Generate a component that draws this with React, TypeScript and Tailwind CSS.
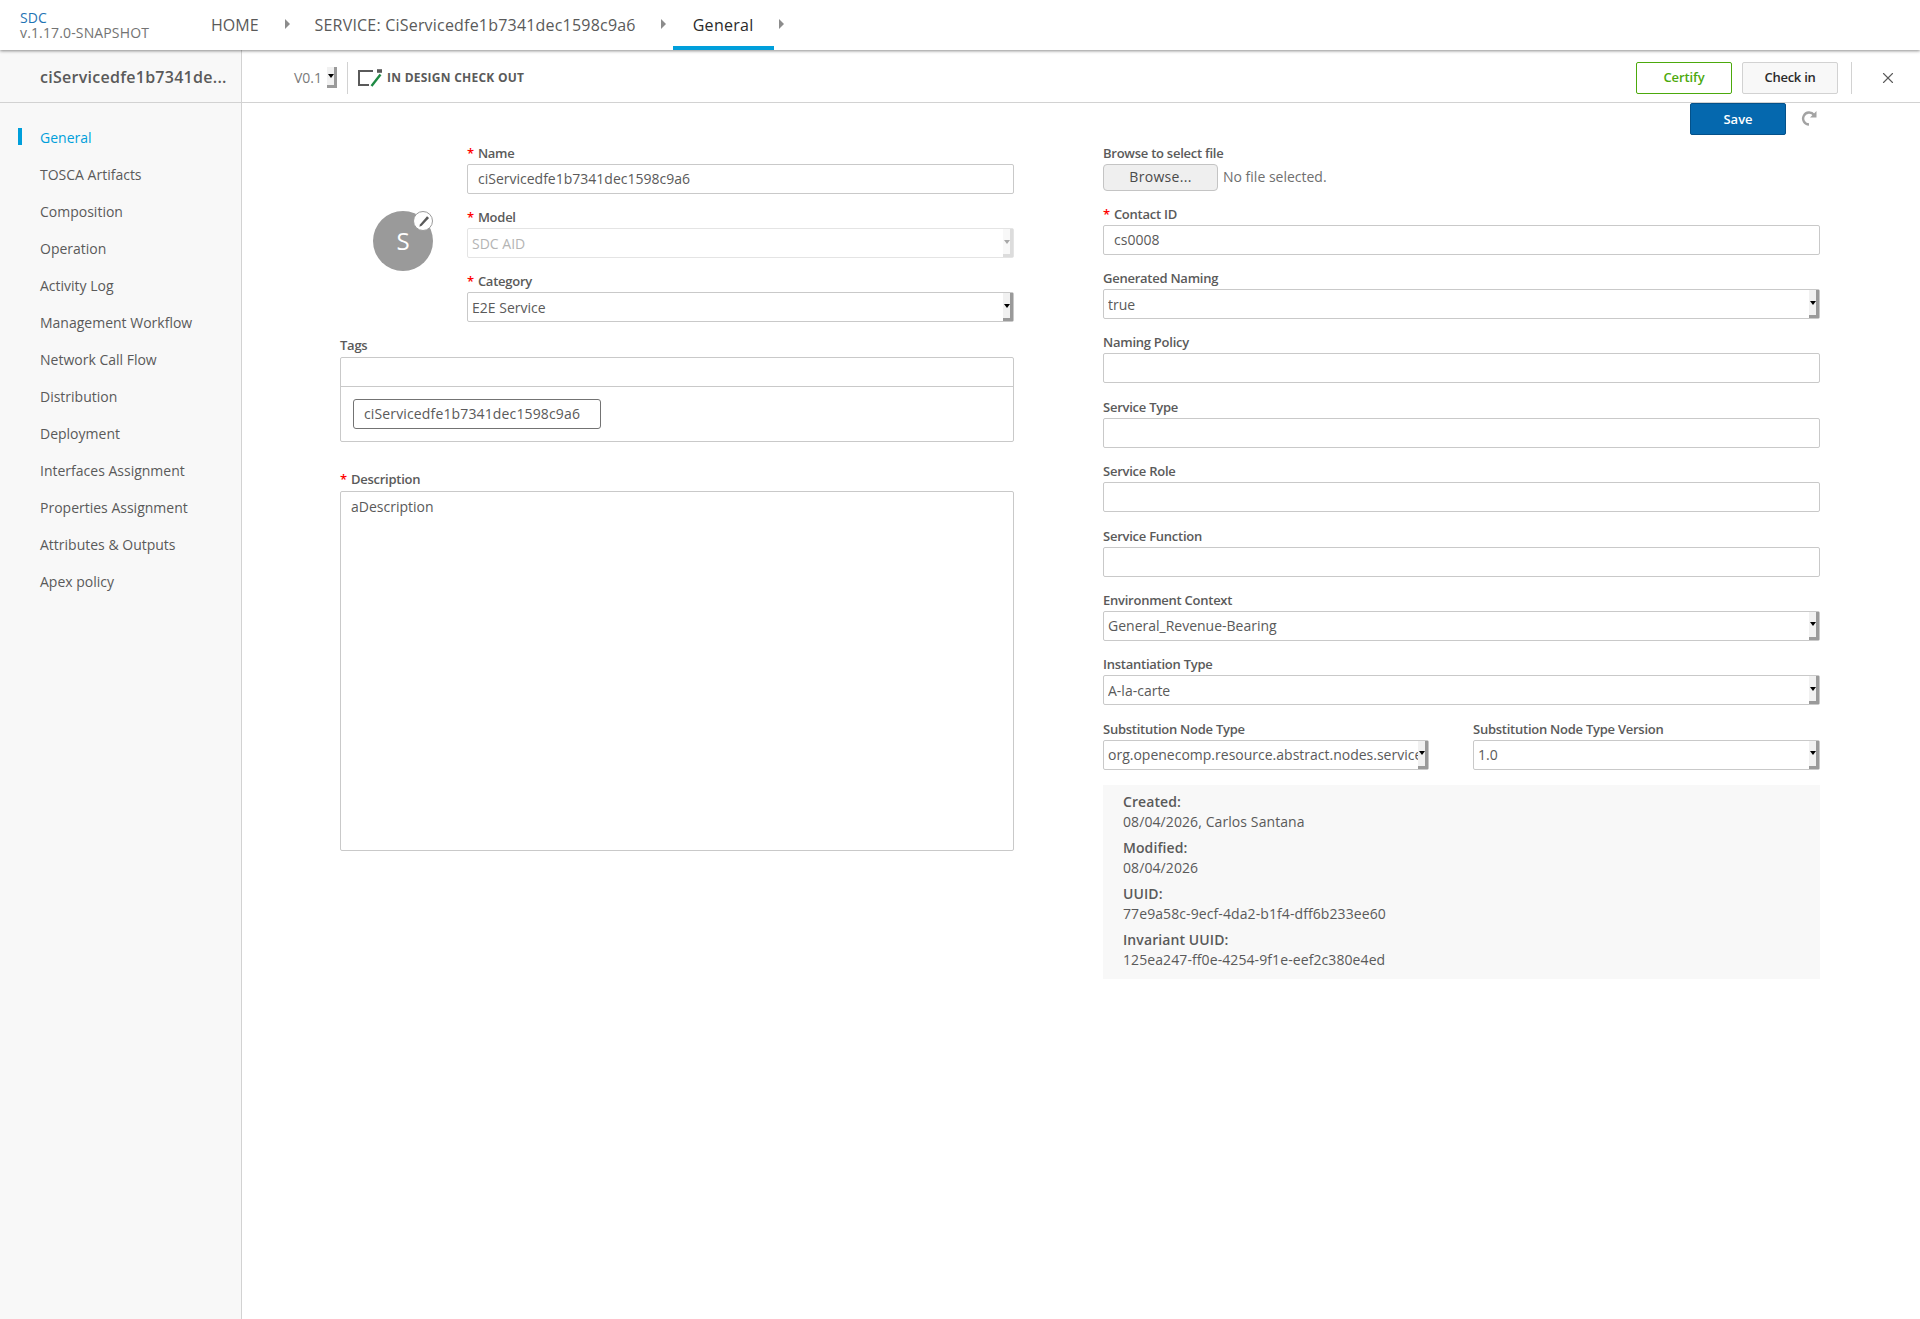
import React from "react";
import { X } from "lucide-react";

const nav = ["General","TOSCA Artifacts","Composition","Operation","Activity Log","Management Workflow","Network Call Flow","Distribution","Deployment","Interfaces Assignment","Properties Assignment","Attributes & Outputs","Apex policy"];

function Crumb() {
  return <span className="w-0 h-0 border-y-[5px] border-y-transparent border-l-[5px] border-l-[#8c8c8c] -mt-[3px]" />;
}

function Spin({ disabled, tall = true }: { disabled?: boolean; tall?: boolean }) {
  return (
    <span className={`flex h-full w-[10px] shrink-0 items-center justify-center border-r-[3px] border-b-[3px] ${disabled ? "border-[#dcdcdc] bg-[#f8f8f8]" : "border-[#9a9a9a] bg-[#f1f1f1]"} ${tall ? "mr-[0px]" : ""}`}>
      <span className={`w-0 h-0 border-x-[3px] border-x-transparent border-t-[4px] ${disabled ? "border-t-[#a8a8a8]" : "border-t-black"}`} />
    </span>
  );
}

function Label({ text, req }: { text: string; req?: boolean }) {
  return (
    <div className="h-[20px] pb-[2px] flex items-center text-[13px] font-semibold tracking-[-0.25px] text-[#5a5a5a] leading-[20px]">
      {req && <span className="text-[#ff0000] mr-[4px] font-semibold">*</span>}
      {text}
    </div>
  );
}

function Input({ value = "" }: { value?: string }) {
  return (
    <div className="h-[30px] border border-[#c9c9c9] rounded-[2px] px-[10px] pb-[2px] flex items-center text-[14px] text-[#5a5a5a] bg-white">{value}</div>
  );
}

function Select({ value, disabled }: { value: string; disabled?: boolean }) {
  return (
    <div className={`h-[30px] border rounded-[2px] pl-[4px] flex items-center text-[14px] bg-white ${disabled ? "border-[#e4e4e4] text-[#b4b4b4]" : "border-[#c9c9c9] text-[#5a5a5a]"}`}>
      <span className="flex-1 overflow-hidden whitespace-nowrap">{value}</span>
      <Spin disabled={disabled} />
    </div>
  );
}

function Field({ label, req, children, className = "mb-[14.4px]" }: { label: string; req?: boolean; children: React.ReactNode; className?: string }) {
  return (
    <div className={className}>
      <Label text={label} req={req} />
      {children}
    </div>
  );
}

function Info({ k, v }: { k: string; v: string }) {
  return (
    <div className="mb-[5px] text-[14px] leading-[20.5px] tracking-[0.09px] text-[#5a5a5a]">
      <div className="font-semibold">{k}</div>
      <div>{v}</div>
    </div>
  );
}

export default function App() {
  return (
    <div className="h-[1319px] w-[1920px] flex flex-col bg-white overflow-hidden text-[#5a5a5a] font-['Open_Sans',sans-serif]">
      <header className="relative z-10 h-[50px] shrink-0 flex bg-white shadow-[0_1px_3px_rgba(0,0,0,0.45)]">
        <div className="w-[211px] pl-[20px] pt-[10px] text-[14px] leading-[15px] tracking-[0.14px]">
          <div className="text-[#1f74b4]">SDC</div>
          <div className="text-[#737373]">v.1.17.0-SNAPSHOT</div>
        </div>
        <div className="flex items-center text-[16px] h-[50px]">
          <span className="-mt-[1px]">HOME</span>
          <span className="ml-[26px] flex"><Crumb /></span>
          <span className="ml-[25px] -mt-[1px] tracking-[0.2px]">SERVICE: CiServicedfe1b7341dec1598c9a6</span>
          <span className="ml-[25px] flex"><Crumb /></span>
          <span className="ml-[7px] h-[50px] px-[20px] flex items-center border-b-4 border-[#009fdb] text-[#2a2a2a] font-medium pt-[3px] tracking-[0.3px]">General</span>
          <span className="ml-[5px] flex"><Crumb /></span>
        </div>
      </header>
      <div className="flex flex-1 min-h-0">
        <aside className="w-[242px] shrink-0 bg-[#f8f8f8] border-r border-[#d2d2d2]">
          <div className="h-[53px] border-b border-[#d2d2d2] pl-[40px] pt-[2px] flex items-center text-[16px] font-semibold tracking-[0.27px] text-[#5a5a5a]">ciServicedfe1b7341de...</div>
          <nav className="pt-[16px]">
            {nav.map((n, i) => (
              <div key={n} className={`relative h-[37px] pl-[40px] flex items-center text-[14px] ${i === 0 ? "text-[#009fdb]" : "text-[#5a5a5a]"}`}>
                {i === 0 && <span className="absolute left-[18px] top-[9px] w-[4px] h-[17px] bg-[#009fdb]" />}
                {n}
              </div>
            ))}
          </nav>
        </aside>
        <main className="flex-1 min-w-0">
          <div className="h-[53px] border-b border-[#d2d2d2] flex items-center pl-[52px] pt-[3px]">
            <span className="text-[14px] text-[#7a7a7a]">V0.1</span>
            <span className="ml-[5px] h-[21px] flex"><Spin tall={false} /></span>
            <span className="ml-[10px] h-[32px] w-px bg-[#d2d2d2]" />
            <svg className="ml-[9px]" width="25" height="18" viewBox="0 0 25 18" fill="none">
              <path d="M16 2H2v14h10" stroke="#5a5a5a" strokeWidth="2" />
              <path d="M20 2h5" stroke="#5a5a5a" strokeWidth="3.6" />
              <path d="M23.5 5.5 14.5 17" stroke="#1e8a44" strokeWidth="2.4" />
            </svg>
            <span className="ml-[5px] text-[12px] font-bold tracking-[0.25px] text-[#5a5a5a]">IN DESIGN CHECK OUT</span>
            <div className="ml-auto flex items-center">
              <button className="w-[96px] h-[32px] border border-[#4ca90c] rounded-[2px] text-[13px] font-semibold tracking-[-0.1px] text-[#4ca90c]">Certify</button>
              <button className="ml-[10px] w-[96px] h-[32px] border border-[#d2d2d2] bg-[#f8f8f8] rounded-[2px] text-[13px] font-semibold tracking-[-0.25px] text-[#2a2a2a]">Check in</button>
              <span className="ml-[13px] w-px h-[32px] bg-[#d2d2d2]" />
              <X className="ml-[27px] mr-[23px] text-[#5a5a5a]" size={18} strokeWidth={1.5} />
            </div>
          </div>
          <div className="h-[41px] flex items-start pl-[1448px]">
            <button className="w-[96px] h-[32px] bg-[#0568ae] border border-[#04518a] rounded-[2px] text-[13px] font-semibold text-white pt-[1px]">Save</button>
            <svg className="ml-[15px] mt-[7px]" width="16" height="16" viewBox="0 0 16 16" fill="none">
              <path d="M13 5A6 6 0 1 0 8 14.5" stroke="#a3a3a3" strokeWidth="2.4" />
              <path d="M15.5 1v6.5H9z" fill="#a3a3a3" />
            </svg>
          </div>
          <div className="flex pl-[98px]">
            <div className="w-[674px]">
              <div className="flex">
                <div className="w-[127px] shrink-0 pl-[33px] pt-[67px]">
                  <div className="relative w-[60px] h-[60px] rounded-full bg-[#9a9a9a] flex items-center justify-center text-white text-[24px]">
                    S
                    <span className="absolute -right-[0px] -top-[0px] w-[20px] h-[20px] rounded-full bg-white border border-[#9a9a9a] flex items-center justify-center">
                      <svg width="13" height="13" viewBox="0 0 11 11"><path d="M8.5 1 2.5 8 2 10l2-.8 6.2-6.7z" fill="#5a5a5a" /></svg>
                    </span>
                  </div>
                </div>
                <div className="flex-1">
                  <Field label="Name" req className="mb-[14px]"><Input value="ciServicedfe1b7341dec1598c9a6" /></Field>
                  <Field label="Model" req className="mb-[14px]"><Select value="SDC AID" disabled /></Field>
                  <Field label="Category" req className="mb-[14px]"><Select value="E2E Service" /></Field>
                </div>
              </div>
              <Field label="Tags" className="mb-[28px]">
                <div className="border border-[#c9c9c9] rounded-[2px] h-[85px] mt-[1px]">
                  <div className="h-[29px] border-b border-[#c9c9c9]" />
                  <div className="pl-[12px] pt-[12px]">
                    <div className="w-[248px] h-[30px] border border-[#737373] rounded-[3px] pl-[10px] pb-[2px] flex items-center text-[14px] tracking-[0.14px] text-[#5a5a5a]">ciServicedfe1b7341dec1598c9a6</div>
                  </div>
                </div>
              </Field>
              <Field label="Description" req>
                <div className="h-[360px] mt-[1px] border border-[#c9c9c9] rounded-[2px] px-[10px] py-[4px] text-[14px] text-[#5a5a5a]">aDescription</div>
              </Field>
            </div>
            <div className="ml-[89px] w-[717px]">
              <Field label="Browse to select file" className="mb-[14px]">
                <div className="flex items-center">
                  <span className="w-[115px] h-[27px] pb-[2px] bg-[#efefef] border border-[#c4c4c4] rounded-[4px] flex items-center justify-center text-[14px] text-[#4a4a4a] tracking-[0.3px]">Browse...</span>
                  <span className="ml-[5px] pb-[2px] text-[14px] text-[#6f6f6f]">No file selected.</span>
                </div>
              </Field>
              <Field label="Contact ID" req className="mb-[14px]"><Input value="cs0008" /></Field>
              <Field label="Generated Naming"><Select value="true" /></Field>
              <Field label="Naming Policy"><Input /></Field>
              <Field label="Service Type"><Input /></Field>
              <Field label="Service Role"><Input /></Field>
              <Field label="Service Function"><Input /></Field>
              <Field label="Environment Context"><Select value="General_Revenue-Bearing" /></Field>
              <Field label="Instantiation Type"><Select value="A-la-carte" /></Field>
              <div className="flex gap-[44px] mb-[15px]">
                <div className="w-[326px]"><Label text="Substitution Node Type" /><Select value="org.openecomp.resource.abstract.nodes.service" /></div>
                <div className="flex-1"><Label text="Substitution Node Type Version" /><Select value="1.0" /></div>
              </div>
              <div className="bg-[#f8f8f8] h-[194px] pl-[20px] pt-[7px]">
                <Info k="Created:" v="08/04/2026, Carlos Santana" />
                <Info k="Modified:" v="08/04/2026" />
                <Info k="UUID:" v="77e9a58c-9ecf-4da2-b1f4-dff6b233ee60" />
                <Info k="Invariant UUID:" v="125ea247-ff0e-4254-9f1e-eef2c380e4ed" />
              </div>
            </div>
          </div>
        </main>
      </div>
    </div>
  );
}
